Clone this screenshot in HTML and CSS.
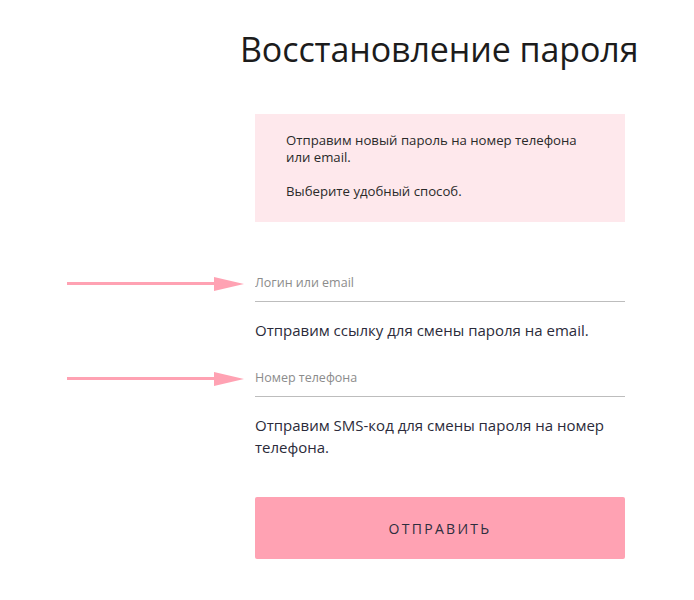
FILE: index.html
```html
<!DOCTYPE html>
<html lang="ru">
<head>
<meta charset="utf-8">
<title>Восстановление пароля</title>
<link rel="stylesheet" href="styles.css">
</head>
<body>
<main class="page">
  <h1 class="title">Восстановление пароля</h1>
  <div class="row">
    <div class="side"></div>
    <div class="col">
      <div class="notice">Отправим новый пароль на номер телефона или email.<br><br>Выберите удобный способ.</div>
    </div>
  </div>
  <div class="row field-row">
    <div class="side"><span class="arrow"><span class="shaft"></span><span class="head"></span></span></div>
    <div class="col"><input class="input" type="text" placeholder="Логин или email"></div>
  </div>
  <div class="row">
    <div class="side"></div>
    <div class="col"><p class="hint">Отправим ссылку для смены пароля на email.</p></div>
  </div>
  <div class="row field-row">
    <div class="side"><span class="arrow"><span class="shaft"></span><span class="head"></span></span></div>
    <div class="col"><input class="input" type="text" placeholder="Номер телефона"></div>
  </div>
  <div class="row">
    <div class="side"></div>
    <div class="col"><p class="hint">Отправим SMS-код для смены пароля на номер телефона.</p></div>
  </div>
  <div class="row">
    <div class="side"></div>
    <div class="col"><button class="submit" type="button">Отправить</button></div>
  </div>
</main>
</body>
</html>
```
FILE: styles.css
```css
html, body {
  margin: 0;
  padding: 0;
  background: #ffffff;
}
body {
  font-family: "Open Sans", "Noto Sans", sans-serif;
  color: #222222;
}
.page {
  width: 694px;
  padding-top: 26px;
}
.title {
  margin: 0 0 41px 240px;
  font-size: 34px;
  font-weight: 400;
  line-height: 47px;
  color: #1c1c1c;
  letter-spacing: -0.1px;
}
.row {
  display: flex;
  align-items: flex-end;
}
.side {
  width: 255px;
  flex: 0 0 255px;
  box-sizing: border-box;
  padding-left: 67px;
}
.col {
  width: 370px;
  flex: 0 0 370px;
}
.notice {
  background: #fee8ec;
  padding: 18px 40px 22px 31px;
  font-size: 13.2px;
  line-height: 17px;
  color: #2a2a2a;
  margin-bottom: 41px;
}
.field-row .side {
  padding-bottom: 11px;
}
.arrow {
  display: flex;
  align-items: center;
  width: 177px;
  height: 15px;
}
.shaft {
  flex: 1 1 auto;
  height: 3px;
  background: #ffa2b3;
}
.head {
  flex: 0 0 auto;
  width: 0;
  height: 0;
  border-top: 7.5px solid transparent;
  border-bottom: 7.5px solid transparent;
  border-left: 30px solid #ffa2b3;
}
.input {
  display: block;
  width: 100%;
  box-sizing: content-box;
  height: 38px;
  padding: 0;
  margin: 0;
  border: 0;
  border-bottom: 1px solid #bdbdbd;
  outline: none;
  background: transparent;
  font-family: "Open Sans", "Noto Sans", sans-serif;
  font-size: 12.5px;
  color: #333333;
}
.input::placeholder {
  color: #8c8c8c;
  opacity: 1;
}
.hint {
  margin: 17px 0 17px 0;
  font-size: 15px;
  line-height: 22px;
  color: #2b2b3a;
}
.submit {
  display: block;
  width: 100%;
  height: 62px;
  margin-top: 22px;
  border: 0;
  border-radius: 2px;
  background: #ffa2b3;
  font-family: "Open Sans", "Noto Sans", sans-serif;
  font-size: 14px;
  letter-spacing: 2.3px;
  text-transform: uppercase;
  color: #2e2e3e;
  padding: 0;
  cursor: pointer;
}
```
